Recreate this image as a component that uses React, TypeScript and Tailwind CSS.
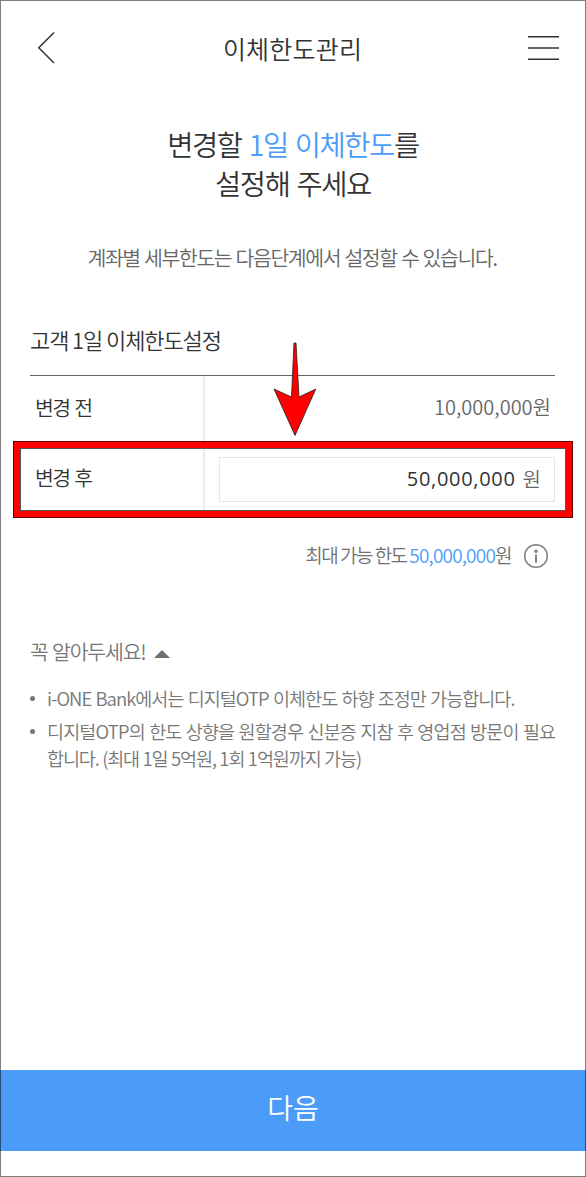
import React from "react";

const notices = [
  [
    {
      text: "i-ONE Bank에서는 디지털OTP 이체한도 하향 조정만 가능합니다.",
      className: "tracking-[-0.95px] [word-spacing:1px]",
    },
  ],
  [
    {
      text: "디지털OTP의 한도 상향을 원할경우 신분증 지참 후 영업점 방문이 필요",
      className: "tracking-[-0.85px] [word-spacing:1px]",
    },
    {
      text: "합니다. (최대 1일 5억원, 1회 1억원까지 가능)",
      className: "tracking-[-1.1px] [word-spacing:0.5px]",
    },
  ],
];

const Header = () => (
  <header className="flex h-[96px] items-center justify-between pl-[37px] pr-[27px] text-[#333]">
    <button aria-label="이전" className="w-[20px]">
      <svg width="19" height="34" viewBox="0 0 19 34" fill="none">
        <path d="M17 1.5 1.8 16.8 17 32" stroke="currentColor" strokeWidth="1.5" />
      </svg>
    </button>
    <h1 className="text-[25px] font-[350] leading-[36px] tracking-[0.2px]">이체한도관리</h1>
    <button aria-label="메뉴">
      <svg width="31" height="26" viewBox="0 0 31 26" fill="none">
        <path d="M0 1.800h31M0 13h31M0 24.200h31" stroke="currentColor" strokeWidth="1.5" />
      </svg>
    </button>
  </header>
);

const Arrow = () => (
  <svg
    className="absolute left-[243px] top-[-34px]"
    width="44"
    height="96"
    viewBox="0 0 44 96"
  >
    <path
      d="M21 1h2l3 54 16.800-8L22 93.500 1 47l17.500 8z"
      fill="#ff0000"
      stroke="#222"
      strokeWidth="0.8"
    />
  </svg>
);

const LimitTable = () => (
  <div className="relative border-t-[1.500px] border-[#666] text-[20px] font-[350]">
    <div className="flex h-[65px]">
      <div className="w-[175px] border-r-2 border-[#ebebeb] pl-[5px] pt-4 text-[20.500px] leading-[30px] tracking-[-1.500px] text-[#333] [word-spacing:1.500px]">
        변경 전
      </div>
      <div className="flex-1 pr-1 pt-4 text-right leading-[30px] text-[#666]">
        10,000,000원
      </div>
    </div>
    <div className="flex h-[70px]">
      <div className="w-[175px] border-r-2 border-[#ebebeb] pl-[5px] pt-[21px] text-[20.500px] leading-[30px] tracking-[-1.500px] text-[#333] [word-spacing:1.500px]">
        변경 후
      </div>
      <div className="flex-1 pl-3.5 pt-4">
        <div className="flex h-[45px] items-center justify-end gap-[7px] border border-[#e6e6e6] pb-px pr-[13px] leading-[30px]">
          <span className="font-['Open_Sans',sans-serif] font-normal tracking-[0.7px] text-[#333]">
            50,000,000
          </span>
          <span className="text-[#666]">원</span>
        </div>
      </div>
    </div>
    <div className="absolute left-[-17px] top-[65px] h-[77px] w-[560px] border border-[#600] bg-transparent">
      <div className="h-full border-[6px] border-[#ff0000]">
        <div className="h-full border border-[#555]" />
      </div>
    </div>
    <Arrow />
  </div>
);

const App = () => {
  return (
    <main className="relative flex h-[1177px] w-[586px] flex-col overflow-hidden whitespace-nowrap bg-white font-['Noto_Sans_CJK_KR',sans-serif]">
      <Header />
      <h2 className="mt-[28px] text-center text-[28.500px] font-[350] leading-[39px] tracking-[-1.400px] text-[#333] [word-spacing:2px]">
        변경할 <span className="text-[#4b9cf8]">1일 이체한도</span>를
        <br />
        설정해 주세요
      </h2>
      <p className="mt-[40px] pr-0.5 text-center text-[20.500px] font-[350] leading-[30px] tracking-[-1.400px] text-[#666] [word-spacing:1px]">
        계좌별 세부한도는 다음단계에서 설정할 수 있습니다.
      </p>

      <section className="mt-[52px] pl-[30px] pr-[31px]">
        <h3 className="h-[51px] text-[22px] font-[350] leading-[30px] tracking-[-1.100px] text-[#333]">
          고객 1일 이체한도설정
        </h3>
        <LimitTable />
        <div className="mt-[29px] flex items-center justify-end gap-3 pr-1.5">
          <p className="pb-0.5 text-[19px] font-[350] leading-[30px] tracking-[-1.500px] text-[#707070]">
            최대 가능 한도{" "}
            <span className="tracking-[-0.8px] text-[#4b9cf8]">50,000,000</span>원
          </p>
          <svg width="26" height="26" viewBox="0 0 26 26" fill="none">
            <circle cx="13" cy="13" r="11.300" stroke="#808080" strokeWidth="1.500" />
            <circle cx="13" cy="8.300" r="1.700" fill="#808080" />
            <path d="M13 11.500v8" stroke="#808080" strokeWidth="2" />
          </svg>
        </div>
      </section>

      <section className="mt-[64px] pl-[30px] font-[350] text-[#777]">
        <h3 className="flex items-center gap-2 text-[20.500px] leading-[30px] tracking-[-1.200px] [word-spacing:1px]">
          꼭 알아두세요!
          <svg className="mt-1.5" width="16" height="8" viewBox="0 0 16 8">
            <path d="M8 0l8 8H0z" fill="#707070" />
          </svg>
        </h3>
        <ul className="mt-[19px] flex flex-col gap-[6px] text-[18.500px] leading-[27px]">
          {notices.map((lines) => (
            <li key={lines[0].text} className="flex">
              <span className="mt-[11px] mr-3 size-[5px] rounded-full bg-[#777]" />
              <div>
                {lines.map(({ text, className }) => (
                  <p key={text} className={className}>
                    {text}
                  </p>
                ))}
              </div>
            </li>
          ))}
        </ul>
      </section>

      <button className="mt-auto mb-[26.500px] h-[81px] bg-[#4b9cf8] pb-1.5 text-[28px] font-[350] text-white">
        다음
      </button>
      <div className="pointer-events-none absolute inset-0 border border-black/50" />
    </main>
  );
};

export default App;
